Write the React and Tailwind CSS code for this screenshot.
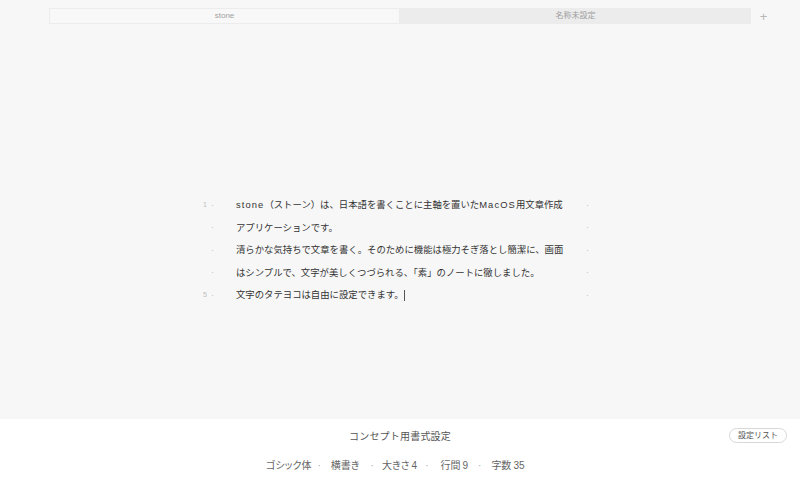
import React from "react";

const lines = [
  { n: "1", parts: [["stone", true], ["（ストーン）は、日本語を書くことに主軸を置いた", false], ["MacOS", true], ["用文章作成", false]] },
  { n: "", parts: [["アプリケーションです。", false]] },
  { n: "", parts: [["清らかな気持ちで文章を書く。そのために機能は極力そぎ落とし簡潔に、画面", false]] },
  { n: "", parts: [["はシンプルで、文字が美しくつづられる、「素」のノートに徹しました。", false]] },
  { n: "5", parts: [["文字のタテヨコは自由に設定できます。", false]], cursor: true },
];

const font = { fontFamily: '"Liberation Sans", "Noto Sans CJK JP", sans-serif' };

export default function App() {
  return (
    <div className="w-[800px] h-[500px] flex flex-col bg-white overflow-hidden" style={font}>
      {/* editor area */}
      <div className="h-[419px] bg-[#f7f7f7] flex flex-col">
        {/* tabs */}
        <div className="flex items-center mt-[8px] pl-[49px] pr-[24px]">
          <div className="w-[351px] h-[16px] border border-[#ececec] bg-[#f8f8f8] flex items-center justify-center text-[8px] text-[#a0a0a0]">
            stone
          </div>
          <div className="w-[351px] h-[16px] bg-[#ececec] flex items-center justify-center text-[8px] text-[#a0a0a0]">
            名称未設定
          </div>
          <div className="flex-1 flex justify-center text-[13px] leading-none font-light text-[#b8b8b8]">+</div>
        </div>

        {/* text */}
        <div className="mt-[170px] flex flex-col">
          {lines.map((l, i) => (
            <div key={i} className="flex items-center h-[22.5px]">
              <div className="w-[207px] text-right text-[7px] text-[#bdbdbd]">{l.n}</div>
              <div className="w-[29px] pl-[4px] text-[9px] text-[#bdbdbd]">·</div>
              <div className="w-[350px] text-[9.37px] text-[#333] whitespace-nowrap flex items-center">
                {l.parts.map(([t, latin], j) => (
                  <span key={j} className={latin ? "tracking-[1.1px]" : ""}>{t}</span>
                ))}
                {l.cursor && <span className="inline-block w-[1px] h-[11px] bg-[#555]" />}
              </div>
              <div className="text-[9px] text-[#bdbdbd]">·</div>
            </div>
          ))}
        </div>
      </div>

      {/* settings panel */}
      <div className="flex-1 bg-white relative flex flex-col items-center">
        <div className="mt-[10px] text-[10px] text-[#555] tracking-[0.2px]">コンセプト用書式設定</div>
        <div className="mt-[14px] self-start ml-[266px] flex items-center text-[10px] text-[#666] [font-feature-settings:'palt']">
          <span>ゴシック体</span>
          <span className="ml-[6px] text-[#aaa]">·</span>
          <span className="ml-[10px]">横書き</span>
          <span className="ml-[11px] text-[#aaa]">·</span>
          <span className="ml-[8px]">大きさ<span className="ml-[2px]">4</span></span>
          <span className="ml-[8px] text-[#aaa]">·</span>
          <span className="ml-[12px]">行間<span className="ml-[2px]">9</span></span>
          <span className="ml-[10px] text-[#aaa]">·</span>
          <span className="ml-[10px]">字数<span className="ml-[2px]">35</span></span>
        </div>
        <button className="absolute right-[13px] top-[9px] h-[15px] px-[8px] rounded-full border border-[#d8d8d8] text-[8px] text-[#555] leading-none">
          設定リスト
        </button>
      </div>
    </div>
  );
}
